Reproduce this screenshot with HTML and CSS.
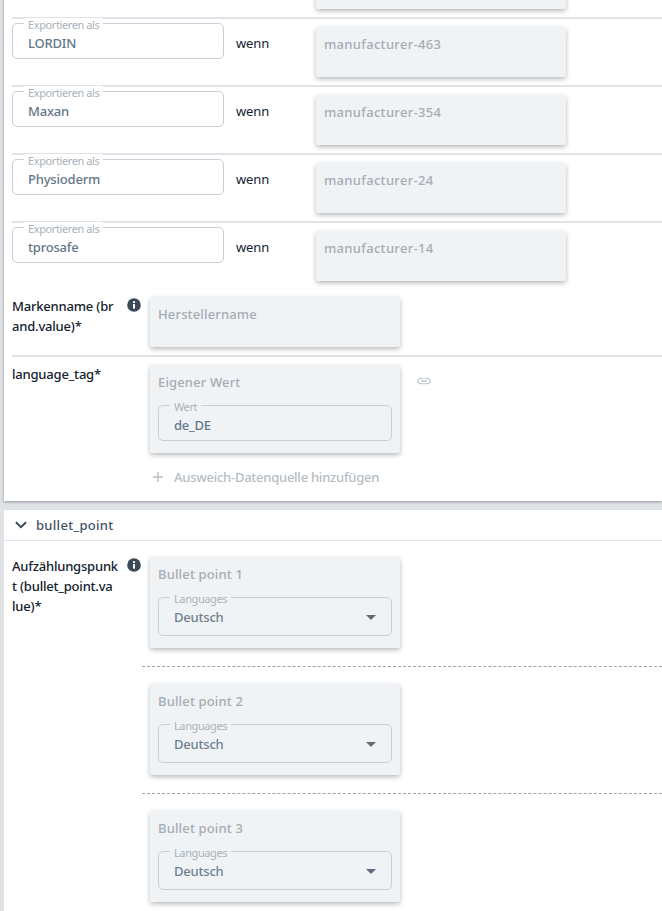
FILE: index.html
```html
<!DOCTYPE html>
<html lang="en">
<head>
    <meta charset="UTF-8">
    <meta name="viewport" content="width=device-width, initial-scale=1.0">
    <title>Export mapping</title>
    <link rel="stylesheet" href="styles.css">
</head>
<body>
    <div class="page">
        <section class="panel panel-top">
            <div class="map-row">
                <div class="card card-map map-source"></div>
            </div>
            <div class="map-row">
                <div class="field"><span class="field-label">Exportieren als</span><span class="field-value">LORDIN</span></div>
                <span class="when">wenn</span>
                <div class="card card-map map-source"><div class="card-title">manufacturer-463</div></div>
            </div>
            <div class="map-row">
                <div class="field"><span class="field-label">Exportieren als</span><span class="field-value">Maxan</span></div>
                <span class="when">wenn</span>
                <div class="card card-map map-source"><div class="card-title">manufacturer-354</div></div>
            </div>
            <div class="map-row">
                <div class="field"><span class="field-label">Exportieren als</span><span class="field-value">Physioderm</span></div>
                <span class="when">wenn</span>
                <div class="card card-map map-source"><div class="card-title">manufacturer-24</div></div>
            </div>
            <div class="map-row">
                <div class="field"><span class="field-label">Exportieren als</span><span class="field-value">tprosafe</span></div>
                <span class="when">wenn</span>
                <div class="card card-map map-source"><div class="card-title">manufacturer-14</div></div>
            </div>

            <div class="attr-row">
                <div class="attr-name">Markenname (br<br>and.value)*</div>
                <svg class="info-icon" viewBox="0 0 14 14"><circle cx="7" cy="7" r="6.8"></circle><rect class="info-mark" x="6" y="6" width="2" height="4.6"></rect><rect class="info-mark" x="6" y="3.2" width="2" height="1.8"></rect></svg>
                <div class="attr-body">
                    <div class="card card-map"><div class="card-title">Herstellername</div></div>
                </div>
            </div>
            <div class="attr-row attr-row-line">
                <div class="attr-name">language_tag*</div>
                <span class="info-space"></span>
                <div class="attr-body">
                    <div class="card-line">
                        <div class="card">
                            <div class="card-title">Eigener Wert</div>
                            <div class="field field-inner"><span class="field-label">Wert</span><span class="field-value">de_DE</span></div>
                        </div>
                        <svg class="link-icon" viewBox="0 0 24 24"><path d="M3.9 12c0-1.71 1.39-3.1 3.1-3.1h4V7H7c-2.76 0-5 2.24-5 5s2.24 5 5 5h4v-1.9H7c-1.71 0-3.1-1.39-3.1-3.1zM8 13h8v-2H8v2zm9-6h-4v1.9h4c1.71 0 3.1 1.39 3.1 3.1s-1.39 3.1-3.1 3.1h-4V17h4c2.76 0 5-2.24 5-5s-2.24-5-5-5z"></path></svg>
                    </div>
                    <div class="add-row">
                        <svg class="plus-icon" viewBox="0 0 10 10"><path d="M5 0v10M0 5h10"></path></svg>
                        <span>Ausweich-Datenquelle hinzufügen</span>
                    </div>
                </div>
            </div>
        </section>

        <section class="panel panel-bottom">
            <header class="panel-head">
                <svg class="chevron" viewBox="0 0 12 8"><path d="M1 1.2l5 5 5-5"></path></svg>
                <span>bullet_point</span>
            </header>
            <div class="attr-row attr-row-list">
                <div class="attr-name">Aufzählungspunk<br>t (bullet_point.va<br>lue)*</div>
                <svg class="info-icon" viewBox="0 0 14 14"><circle cx="7" cy="7" r="6.8"></circle><rect class="info-mark" x="6" y="6" width="2" height="4.6"></rect><rect class="info-mark" x="6" y="3.2" width="2" height="1.8"></rect></svg>
                <div class="bullet-list">
                    <div class="bullet-item">
                        <div class="card">
                            <div class="card-title">Bullet point 1</div>
                            <div class="field field-inner field-select"><span class="field-label">Languages</span><span class="field-value">Deutsch</span><span class="caret"></span></div>
                        </div>
                    </div>
                    <div class="bullet-item">
                        <div class="card">
                            <div class="card-title">Bullet point 2</div>
                            <div class="field field-inner field-select"><span class="field-label">Languages</span><span class="field-value">Deutsch</span><span class="caret"></span></div>
                        </div>
                    </div>
                    <div class="bullet-item">
                        <div class="card">
                            <div class="card-title">Bullet point 3</div>
                            <div class="field field-inner field-select"><span class="field-label">Languages</span><span class="field-value">Deutsch</span><span class="caret"></span></div>
                        </div>
                    </div>
                </div>
            </div>
        </section>
    </div>
</body>
</html>
```

FILE: styles.css
```css
html, body {
    height: 100%;
    margin: 0;
    overflow: hidden;
}
body {
    font-family: "Noto Sans", Arial, sans-serif;
    font-size: 13px;
    line-height: 20px;
    color: #14212e;
    background-color: #dee3e7;
}
.page {
    margin: -49px 0 0 4px;
}
.panel {
    background-color: white;
    box-shadow: 0 1px 3px rgba(0,0,0,0.35);
}
.panel-top {
    padding-left: 8px;
    margin-bottom: 9px;
}
.panel-bottom {
    padding-left: 8px;
    padding-bottom: 9px;
    box-shadow: none;
}
.panel-head {
    display: flex;
    align-items: center;
    gap: 9px;
    height: 30px;
    margin-left: -8px;
    padding-left: 11px;
    border-bottom: 1px solid #e0e4e8;
    font-weight: 500;
    color: #3f5368;
    letter-spacing: 0.3px;
}
.chevron {
    width: 12px;
    height: 8px;
    fill: none;
    stroke: #3c4a58;
    stroke-width: 2;
}
.map-row {
    display: flex;
    align-items: flex-start;
    padding: 4px 0 8px;
    border-bottom: 2px solid #dfe3e8;
}
.map-row:nth-child(5) {
    border-bottom: none;
}
.field {
    position: relative;
    box-sizing: border-box;
    width: 212px;
    height: 36px;
    padding: 9px 15px 5px;
    border: 1px solid #c9cfd5;
    border-radius: 5px;
    background-color: white;
}
.field-label {
    position: absolute;
    top: -6px;
    left: 11px;
    padding: 0 4px;
    font-size: 11px;
    line-height: 14px;
    letter-spacing: -0.4px;
    color: #a9b2ba;
    background-color: inherit;
}
.field-value {
    display: block;
    font-weight: 500;
    letter-spacing: -0.2px;
    color: #647789;
}
.when {
    width: 80px;
    margin: 10px 0 0 12px;
    letter-spacing: -0.1px;
}
.card {
    box-sizing: border-box;
    width: 250px;
    padding: 7px 8px 12px;
    background-color: #f0f3f6;
    border-radius: 2px;
    box-shadow: 0 2px 5px rgba(0,0,0,0.28);
}
.card-map {
    height: 50px;
}
.map-source {
    margin-top: 4px;
}
.map-source .card-title {
    letter-spacing: 0.3px;
}
.map-row:first-child .map-source {
    margin-left: 304px;
}
.card-title {
    font-weight: 500;
    color: #a5acb3;
    letter-spacing: 0.15px;
}
.field-inner {
    width: 234px;
    margin-top: 13px;
    background-color: #f0f3f6;
}
.field-select {
    height: 39px;
    padding-top: 9px;
}
.field-select .field-value {
    color: #71808e;
}
.caret {
    position: absolute;
    top: 17px;
    right: 15px;
    width: 0;
    height: 0;
    border-left: 5.5px solid transparent;
    border-right: 5.5px solid transparent;
    border-top: 5.5px solid #5f6d7a;
}
.attr-row {
    display: flex;
    align-items: flex-start;
    padding: 8px 0;
}
.attr-row-line {
    border-top: 2px solid #dfe3e8;
}
.attr-row-list {
    padding: 16px 0 0;
}
.attr-name {
    width: 110px;
    margin-top: -1px;
    font-weight: 500;
    letter-spacing: -0.2px;
}
.info-icon {
    width: 14px;
    height: 14px;
    margin: 1px 0 0 5px;
    fill: #3c4a58;
}
.info-mark {
    fill: white;
}
.info-space {
    width: 14px;
    margin-left: 5px;
}
.attr-body {
    margin-left: 9px;
}
.card-line {
    display: flex;
    align-items: flex-start;
}
.link-icon {
    width: 16px;
    height: 16px;
    margin: 8px 0 0 16px;
    fill: #bcc4cc;
}
.add-row {
    display: flex;
    align-items: center;
    gap: 11px;
    padding: 14px 0 6px 3px;
    font-weight: 500;
    letter-spacing: -0.25px;
    color: #b5bdc4;
}
.plus-icon {
    width: 10px;
    height: 10px;
    fill: none;
    stroke: #b5bdc4;
    stroke-width: 1.4;
}
.bullet-list {
    flex: 1;
    margin-left: 1px;
}
.bullet-item {
    padding: 0 0 18px 8px;
    margin-bottom: 17px;
    border-bottom: 1px dashed #9aa5ae;
}
.bullet-item:last-child {
    padding-bottom: 0;
    margin-bottom: 0;
    border-bottom: none;
}
```
